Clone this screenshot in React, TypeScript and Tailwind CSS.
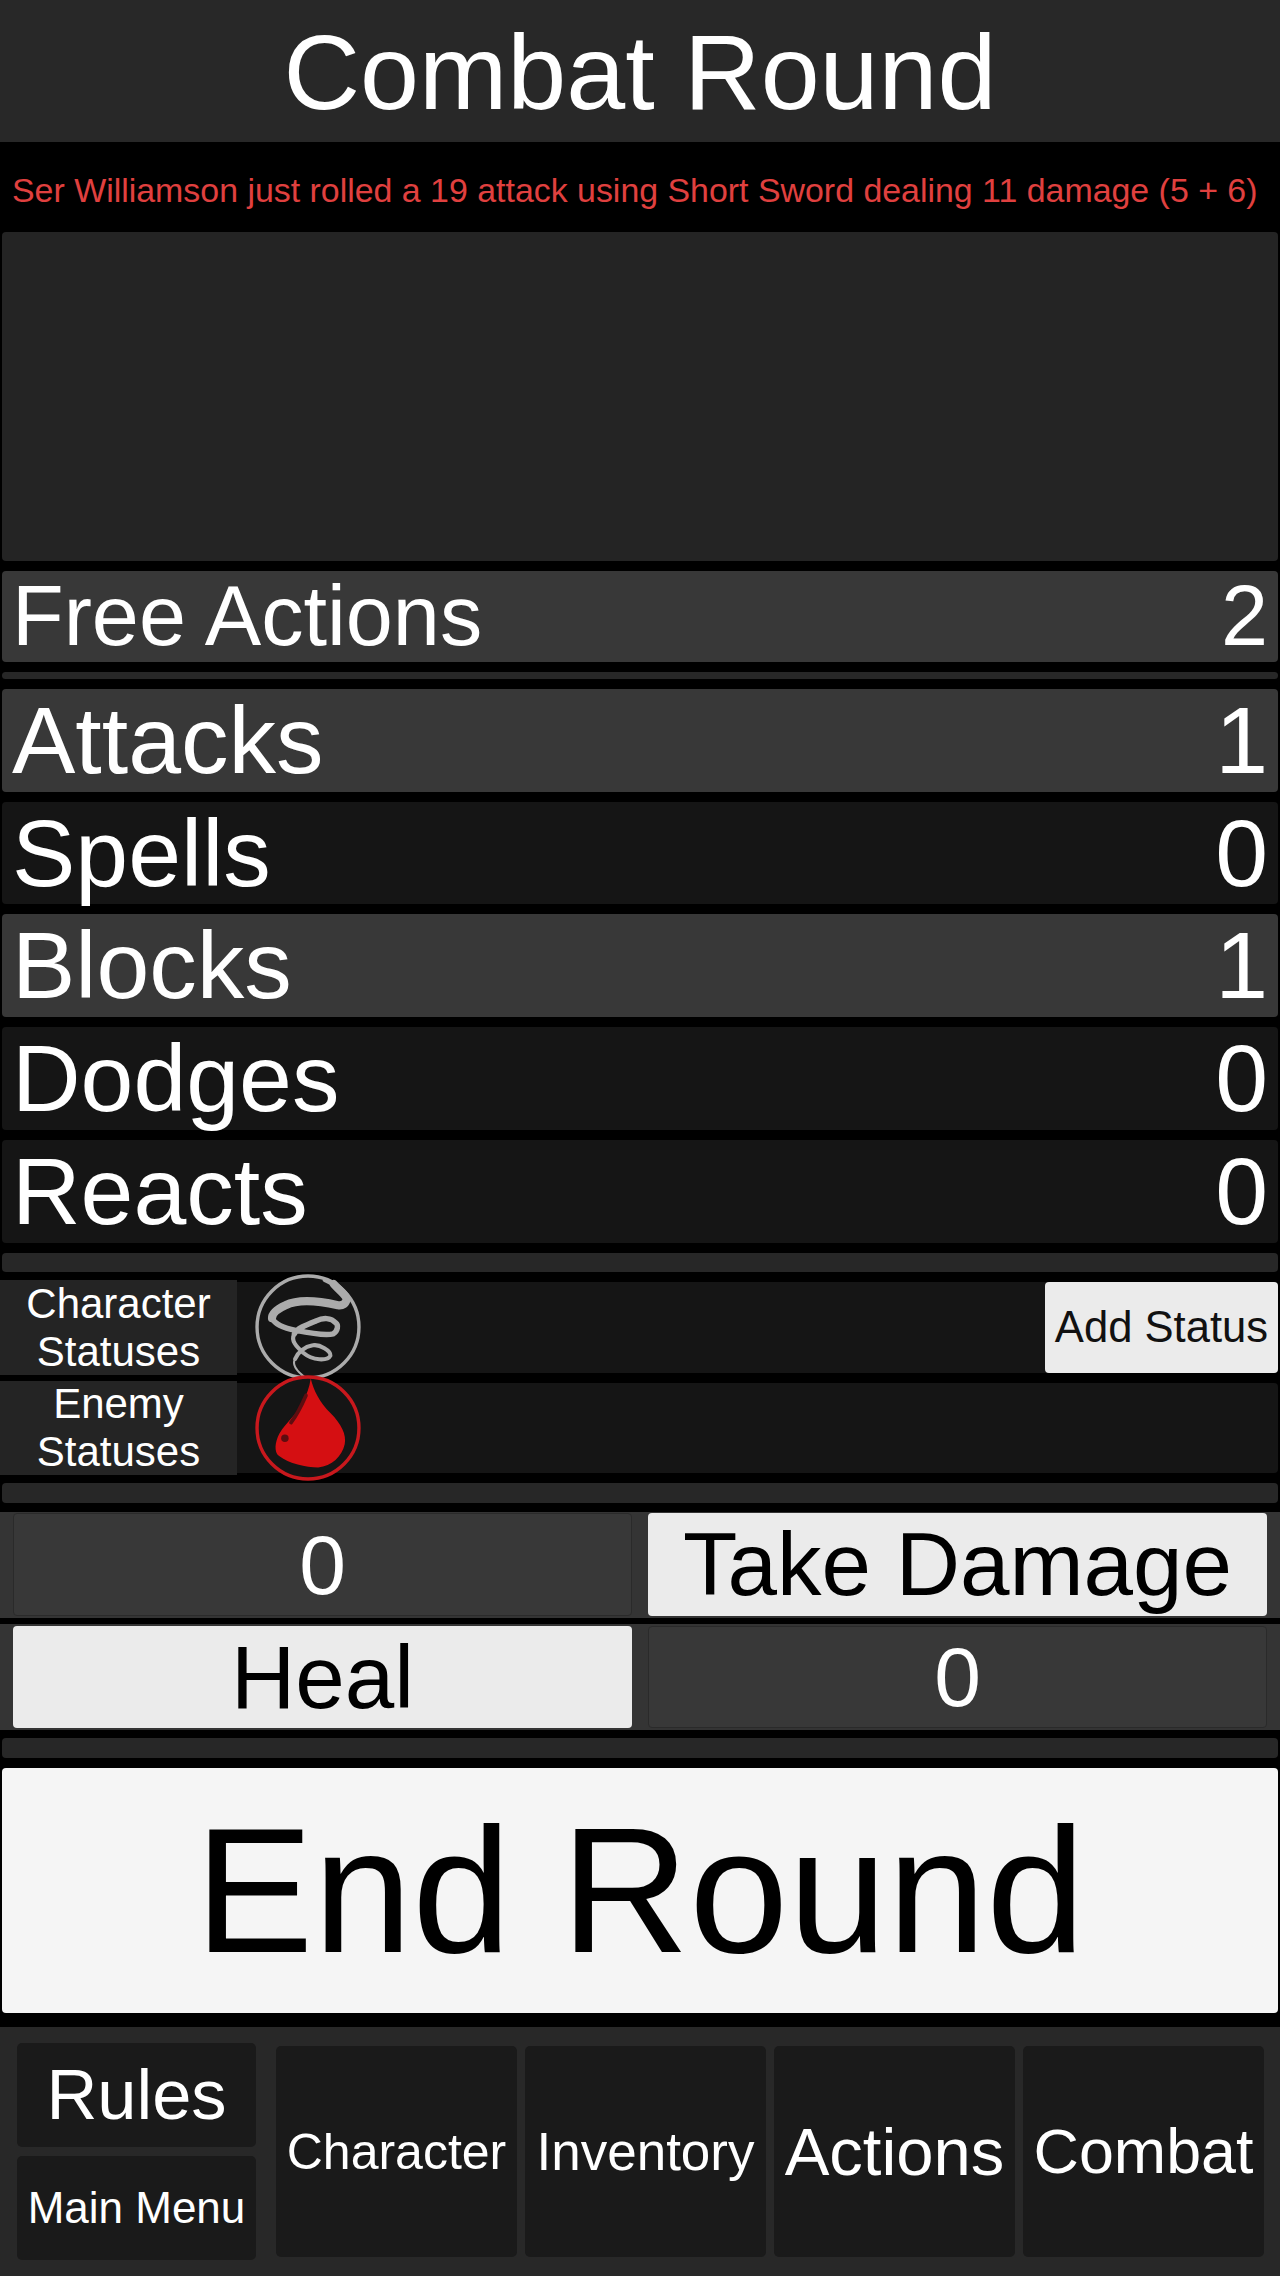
const rowText = "flex items-center justify-between rounded-[4px] px-[10px] text-white";

function CountRow({ label, value, active, height }: { label: string; value: number; active?: boolean; height: string }) {
  return (
    <div className={`${rowText} ${height} text-[95px] leading-none ${active ? "bg-[#383838]" : "bg-[#151515]"}`}>
      <span>{label}</span>
      <span>{value}</span>
    </div>
  );
}

function Spacer({ className }: { className: string }) {
  return <div className={`mx-[2px] rounded-[4px] bg-[#272727] ${className}`} />;
}

function TornadoIcon() {
  return (
    <svg width="106" height="106" viewBox="0 0 312 312" className="relative -my-[8px] ml-[18px] shrink-0">
      <circle cx="156" cy="156" r="150" fill="#151515" stroke="#ababab" strokeWidth="10" />
      <g fill="none" stroke="#ababab" strokeLinecap="round" strokeLinejoin="round">
        <path d="M205 18 C215 24 224 26 232 30" strokeWidth="12" />
        <path d="M232 30 C244 44 262 56 270 72 C268 88 258 94 244 92 C200 82 130 72 90 92 C68 102 50 116 50 130" strokeWidth="24" />
        <path d="M50 130 C60 150 90 160 120 166 C160 174 210 182 230 176 C244 168 246 150 238 144 C224 128 200 128 180 138 C150 150 124 160 116 176" strokeWidth="16" />
        <path d="M116 176 C104 196 122 214 142 232 C170 256 214 256 222 240 C224 226 190 206 170 210 C146 214 126 230 118 250" strokeWidth="12" />
        <path d="M118 250 C106 270 128 290 150 306" strokeWidth="6" />
      </g>
    </svg>
  );
}

function BloodIcon() {
  return (
    <svg width="106" height="106" viewBox="0 0 312 312" className="relative -my-[8px] ml-[18px] shrink-0">
      <circle cx="156" cy="156" r="150" fill="#151515" stroke="#c8181d" strokeWidth="10" />
      <path
        d="M164 10 C172 44 190 80 222 112 C254 144 270 176 264 204 C256 240 226 268 186 272 C150 272 100 262 70 238 C56 226 58 198 72 172 C92 138 124 116 142 78 C152 58 160 36 164 10 Z"
        fill="#d50f12"
      />
      <path d="M150 60 C136 92 124 116 106 140" fill="none" stroke="#5e0d10" strokeWidth="11" strokeLinecap="round" />
      <circle cx="88" cy="186" r="11" fill="#5e0d10" />
    </svg>
  );
}

function StatusRow({ lines, icon, button, height }: { lines: string[]; icon: React.ReactNode; button?: boolean; height: string }) {
  return (
    <div className={`mr-[2px] flex items-stretch rounded-r-[4px] bg-[#151515] text-white ${height}`}>
      <div className="-my-[2px] flex w-[237px] shrink-0 flex-col items-center justify-center bg-[#242424] text-[42px] leading-[48px]">
        {lines.map((l) => (
          <span key={l}>{l}</span>
        ))}
      </div>
      {icon}
      {button && (
        <button className="ml-auto w-[233px] rounded-[4px] bg-[#ebebeb] text-[43.6px] leading-none text-[#111]">Add Status</button>
      )}
    </div>
  );
}

function NavButton({ label, size }: { label: string; size: string }) {
  return (
    <button className={`flex h-[211px] w-[241px] items-center justify-center rounded-[5px] bg-[#1a1a1a] leading-none text-white ${size}`}>
      {label}
    </button>
  );
}

function DamageInput() {
  return (
    <div className="flex items-center justify-center rounded-[4px] border border-[#2a2a2a] bg-[#383838] text-[84px] leading-none text-white">0</div>
  );
}

function DamageButton({ label }: { label: string }) {
  return (
    <button className="flex items-center justify-center rounded-[4px] bg-[#ebebeb] text-[89px] leading-none text-black">{label}</button>
  );
}

export default function App() {
  return (
    <div className="flex h-[2276px] w-[1280px] flex-col overflow-hidden bg-black [font-family:'Liberation_Sans',Arial,sans-serif]">
      <h1 className="flex h-[142px] items-center justify-center bg-[#282828] pt-[2px] text-[106px] leading-none font-normal text-white">Combat Round</h1>

      <div className="mt-[8px] flex h-[82px] items-center whitespace-nowrap pl-[12px] text-[33.9px] leading-none text-[#e0403f]">
        Ser Williamson just rolled a 19 attack using Short Sword dealing 11 damage (5 + 6)
      </div>

      <div className="flex flex-col gap-[10px]">
        <div className="mx-[2px] h-[329px] rounded-[4px] bg-[#242424]" />

        <div className="mx-[2px] flex flex-col gap-[10px]">
          <div className={`${rowText} h-[91px] bg-[#383838] text-[84.6px] leading-none`}>
            <span>Free Actions</span>
            <span>2</span>
          </div>
          <div className="h-[7px] rounded-[4px] bg-[#272727]" />
          <CountRow label="Attacks" value={1} active height="h-[103px]" />
          <CountRow label="Spells" value={0} height="h-[102px]" />
          <CountRow label="Blocks" value={1} active height="h-[103px]" />
          <CountRow label="Dodges" value={0} height="h-[103px]" />
          <CountRow label="Reacts" value={0} height="h-[103px]" />
        </div>

        <Spacer className="h-[19px]" />

        <StatusRow lines={["Character", "Statuses"]} icon={<TornadoIcon />} button height="h-[91px]" />
        <StatusRow lines={["Enemy", "Statuses"]} icon={<BloodIcon />} height="h-[90px]" />

        <Spacer className="h-[20px]" />

        <div className="-mt-px -mb-[2px] flex flex-col gap-[6px]">
          <div className="grid h-[106px] grid-cols-2 gap-[16px] bg-[#343434] px-[13px] pt-px pb-[2px]">
            <DamageInput />
            <DamageButton label="Take Damage" />
          </div>
          <div className="grid h-[106px] grid-cols-2 gap-[16px] bg-[#343434] px-[13px] py-[2px]">
            <DamageButton label="Heal" />
            <DamageInput />
          </div>
        </div>

        <Spacer className="h-[20px]" />

        <button className="mx-[2px] h-[245px] rounded-[4px] bg-[#f5f5f5] text-[178px] leading-none text-black">End Round</button>
      </div>

      <div className="mt-[14px] flex flex-1 items-center bg-[#282828] pl-[17px]">
        <div className="flex w-[239px] flex-col gap-[9px] text-white">
          <button className="h-[104px] rounded-[5px] bg-[#1a1a1a] text-[70.5px] leading-none">Rules</button>
          <button className="h-[104px] rounded-[5px] bg-[#1a1a1a] text-[44px] leading-none">Main Menu</button>
        </div>
        <div className="ml-[20px] flex gap-[8px]">
          <NavButton label="Character" size="text-[50px]" />
          <NavButton label="Inventory" size="text-[53px]" />
          <NavButton label="Actions" size="text-[67px]" />
          <NavButton label="Combat" size="text-[62.8px]" />
        </div>
      </div>
    </div>
  );
}
